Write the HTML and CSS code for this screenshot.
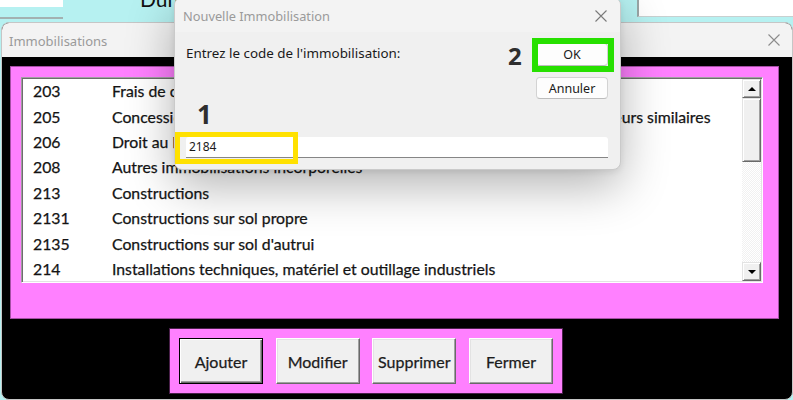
FILE: index.html
```html
<!DOCTYPE html>
<html lang="fr">
<head>
<meta charset="utf-8">
<title>Immobilisations</title>
<link rel="stylesheet" href="styles.css">
</head>
<body>
<div class="desktop">
  <div class="bg-app">
    <div class="bg-field-left"></div>
    <span class="bg-label">Durée d'amortissement</span>
    <div class="bg-field-right"></div>
  </div>

  <section class="win main-win">
    <header class="titlebar">
      <span class="win-title">Immobilisations</span>
      <svg class="close-icon" width="12" height="12" viewBox="0 0 12 12"><path d="M0.5 0.5L11.5 11.5M11.5 0.5L0.5 11.5" stroke="#8c8c8c" stroke-width="1.1" fill="none"/></svg>
    </header>
    <div class="win-body">
      <div class="list-panel">
        <div class="listbox">
          <ul class="rows">
            <li><span class="code">203</span><span class="desc">Frais de constitution</span></li>
            <li><span class="code">205</span><span class="desc">Concessions et droits similaires, brevets, licences et logiciels, droits et valeurs similaires</span></li>
            <li><span class="code">206</span><span class="desc">Droit au bail</span></li>
            <li><span class="code">208</span><span class="desc">Autres immobilisations incorporelles</span></li>
            <li><span class="code">213</span><span class="desc">Constructions</span></li>
            <li><span class="code">2131</span><span class="desc">Constructions sur sol propre</span></li>
            <li><span class="code">2135</span><span class="desc">Constructions sur sol d'autrui</span></li>
            <li><span class="code">214</span><span class="desc">Installations techniques, matériel et outillage industriels</span></li>
          </ul>
          <div class="scrollbar">
            <div class="sb-btn sb-up"></div>
            <div class="sb-thumb"></div>
            <div class="sb-track"></div>
            <div class="sb-btn sb-down"></div>
          </div>
        </div>
      </div>
      <div class="btn-panel">
        <button class="btn btn-default">Ajouter</button>
        <button class="btn">Modifier</button>
        <button class="btn">Supprimer</button>
        <button class="btn">Fermer</button>
      </div>
    </div>
  </section>

  <section class="dialog">
    <header class="dlg-titlebar">
      <span class="dlg-title">Nouvelle Immobilisation</span>
      <svg class="close-icon dlg-close" width="12" height="12" viewBox="0 0 12 12"><path d="M0.5 0.5L11.5 11.5M11.5 0.5L0.5 11.5" stroke="#7a7a7a" stroke-width="1.1" fill="none"/></svg>
    </header>
    <div class="dlg-body">
      <div class="dlg-top">
        <span class="dlg-label">Entrez le code de l'immobilisation:</span>
        <div class="dlg-actions">
          <button class="dbtn">OK</button>
          <button class="dbtn dbtn-cancel">Annuler</button>
        </div>
      </div>
      <div class="dlg-input">2184</div>
    </div>
  </section>

  <div class="mark mark-yellow"></div>
  <div class="mark mark-green"></div>
  <span class="step step-1">1</span>
  <span class="step step-2">2</span>
</div>
</body>
</html>
```

FILE: styles.css
```css
* { box-sizing: border-box; }

html, body {
  margin: 0;
  padding: 0;
}

body {
  width: 793px;
  height: 400px;
  overflow: hidden;
  background: #b6f1f1;
  font-family: "Lato", "Liberation Sans", sans-serif;
}

.desktop {
  position: relative;
  width: 793px;
  height: 400px;
  overflow: hidden;
}

/* background application strip */
.bg-app {
  display: flex;
  align-items: flex-start;
  height: 22px;
}

.bg-field-left {
  width: 63px;
  height: 19px;
  background: linear-gradient(#ffffff 0 7px, transparent 7px);
  border-bottom: 2px solid #a3b1b1;
}

.bg-label {
  margin-left: 77px;
  margin-top: -13px;
  font-size: 21px;
  line-height: 24px;
  color: #111;
  white-space: nowrap;
}

.bg-field-right {
  margin-left: auto;
  width: 156px;
  height: 17px;
  background: #ffffff;
  border-left: 2px solid #9aa6a6;
  border-bottom: 1px solid #c8d0d0;
}

/* main window */
.main-win {
  position: absolute;
  left: 1px;
  top: 22px;
  width: 792px;
  height: 378px;
  border: 1px solid #c6c6c6;
  border-radius: 8px;
  background: #000;
  overflow: hidden;
  display: flex;
  flex-direction: column;
}

.titlebar {
  height: 34px;
  flex: none;
  background: #f3f3f3;
  display: flex;
  align-items: center;
  justify-content: space-between;
  padding: 0 12px 0 7px;
}

.win-title {
  font-family: "Noto Sans", "Open Sans", sans-serif;
  font-size: 13px;
  color: #9a9a9a;
  margin-top: 2px;
}

.close-icon { display: block; flex: none; }

.win-body {
  flex: 1;
  display: flex;
  flex-direction: column;
  align-items: flex-start;
  padding: 9px 12px 0 8px;
}

.list-panel {
  width: 769px;
  height: 253px;
  background: #ff80ff;
  border: 1px solid #a550a5;
  padding: 10px 0 0 10px;
}

.listbox {
  width: 742px;
  height: 206px;
  background: #fff;
  border: 1px solid;
  border-color: #a0a0a0 #ffffff #ffffff #a0a0a0;
  box-shadow: inset 1px 1px 0 #6d6d6d, inset -1px -1px 0 #e3e3e3;
  display: flex;
}

.rows {
  list-style: none;
  margin: 0;
  padding: 0 0 0 11px;
  flex: 1;
  min-width: 0;
  overflow: hidden;
}

.rows li {
  display: flex;
  align-items: center;
  height: 25.4px;
  font-size: 15.8px;
  color: #141414;
  white-space: nowrap;
  -webkit-text-stroke: 0.25px #141414;
}

.code { width: 79px; flex: none; }

/* scrollbar */
.scrollbar {
  width: 19px;
  flex: none;
  margin: 1px 1px 1px 0;
  display: flex;
  flex-direction: column;
}

.sb-btn, .sb-thumb {
  background: #f0f0f0;
  border: 1px solid;
  border-color: #e3e3e3 #696969 #696969 #e3e3e3;
  box-shadow: inset 1px 1px 0 #ffffff, inset -1px -1px 0 #a0a0a0;
}

.sb-btn {
  height: 19px;
  display: flex;
  align-items: center;
  justify-content: center;
}

.sb-btn::after {
  content: "";
  width: 0;
  height: 0;
  border-left: 4px solid transparent;
  border-right: 4px solid transparent;
}

.sb-up::after { border-bottom: 4px solid #000; }
.sb-down::after { border-top: 4px solid #000; }

.sb-thumb { height: 64px; }

.sb-track {
  flex: 1;
  background: repeating-conic-gradient(#f1f1f1 0 25%, #ffffff 0 50%) 0 0 / 2px 2px;
}

/* command buttons */
.btn-panel {
  margin-top: 9px;
  margin-left: 159px;
  display: flex;
  gap: 12.67px;
  padding: 9px;
  background: #ff80ff;
  border: 1px solid #4a204a;
}

.btn {
  width: 84px;
  height: 46px;
  background: #f0f0f0;
  border: 1px solid;
  border-color: #ffffff #696969 #696969 #ffffff;
  box-shadow: inset -1px -1px 0 #a0a0a0, inset 1px 1px 0 #e3e3e3;
  font-family: "Lato", "Liberation Sans", sans-serif;
  font-size: 16px;
  color: #1c1c1c;
  -webkit-text-stroke: 0.25px #1c1c1c;
  padding: 0;
}

.btn-default {
  border-color: #000;
  box-shadow: inset 1px 1px 0 #ffffff, inset -1px -1px 0 #696969, inset -2px -2px 0 #a0a0a0;
}

/* dialog */
.dialog {
  position: absolute;
  left: 174px;
  top: -3px;
  width: 447px;
  height: 173px;
  border: 1px solid #cacaca;
  border-radius: 8px;
  background: #f0f0f0;
  box-shadow: 0 16px 48px rgba(0, 0, 0, 0.3), 0 2px 6px rgba(0, 0, 0, 0.08);
  overflow: hidden;
  font-family: "Noto Sans", "Open Sans", sans-serif;
}

.dlg-titlebar {
  height: 34px;
  background: #f3f3f3;
  display: flex;
  align-items: center;
  justify-content: space-between;
  padding: 0 13px 0 8px;
}

.dlg-title {
  font-size: 12.8px;
  color: #9a9a9a;
  margin-top: 2px;
}

.dlg-close { margin-top: 1px; }

.dlg-body {
  padding: 11px 12px 0 11px;
}

.dlg-top {
  display: flex;
  justify-content: space-between;
  align-items: flex-start;
}

.dlg-label {
  margin-top: 1px;
  font-size: 13.4px;
  line-height: 18px;
  color: #1a1a1a;
}

.dlg-actions {
  display: flex;
  flex-direction: column;
  gap: 11px;
}

.dbtn {
  width: 72px;
  height: 23px;
  padding: 0;
  background: #fdfdfd;
  border: 1px solid #d3d3d3;
  border-bottom-color: #bdbdbd;
  border-radius: 4px;
  font-family: "Noto Sans", "Open Sans", sans-serif;
  font-size: 12.5px;
  color: #1a1a1a;
}

.dbtn-cancel { height: 22px; }

.dlg-input {
  margin-top: 38px;
  height: 21px;
  background: #ffffff;
  border-bottom: 1px solid #868686;
  border-radius: 3px 3px 0 0;
  padding-left: 3px;
  font-size: 12px;
  line-height: 20px;
  color: #1a1a1a;
}

/* annotations drawn over the screenshot */
.mark {
  position: absolute;
  pointer-events: none;
}

.mark-yellow {
  left: 175px;
  top: 132px;
  width: 123px;
  height: 32px;
  border: 5px solid #ffe100;
}

.mark-green {
  left: 532px;
  top: 38px;
  width: 82px;
  height: 34px;
  border: 6px solid #27e000;
}

.step {
  position: absolute;
  font-family: "Noto Sans", "Open Sans", sans-serif;
  font-weight: 700;
  line-height: 25px;
  color: #2e2e2e;
}

.step-1 { left: 197px; top: 102px; font-size: 26px; }
.step-2 { left: 508px; top: 43px; font-size: 24px; }
```
